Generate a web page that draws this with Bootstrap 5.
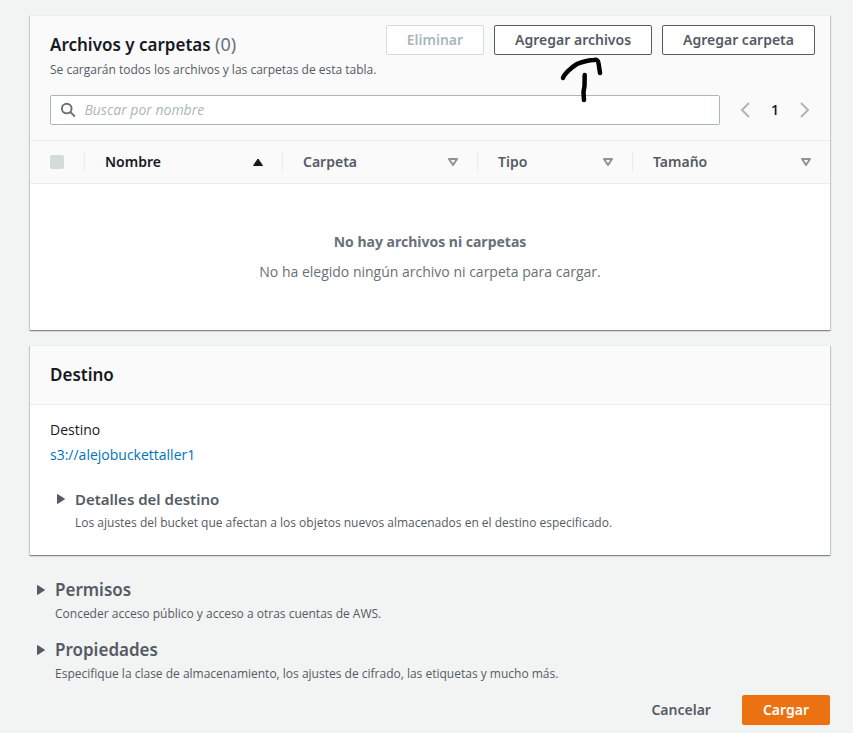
<!DOCTYPE html>
<html lang="es">
<head>
<meta charset="utf-8">
<meta name="viewport" content="width=device-width, initial-scale=1">
<title>Cargar</title>
<link href="https://cdn.jsdelivr.net/npm/bootstrap@5.3.0/dist/css/bootstrap.min.css" rel="stylesheet">
<style>
  body { background: #f2f3f3; color: #16191f; font-family: "Open Sans", "Noto Sans", sans-serif; font-size: 14px; line-height: 20px; }
  h2, h3, th, .act, .empty-title { font-family: "Noto Sans", "Open Sans", sans-serif; }
  .page { padding: 15px 23px 8px 30px; }
  .panel { background: #fff; box-shadow: 0 1px 1px 0 rgba(0,28,36,.3), 1px 1px 1px 0 rgba(0,28,36,.15), -1px 1px 1px 0 rgba(0,28,36,.15); border-top: 1px solid #eaeded; }
  .panel + .panel { margin-top: 15px; }
  .panel-top { background: #fafafa; border-bottom: 1px solid #eaeded; }
  .files-top { padding: 9px 15px 15px 20px; }
  .dest-top { padding: 18px 20px; }
  h2, h3 { font-size: 17px; line-height: 22px; font-weight: 600; margin: 0; }
  h3.minor { font-size: 15px; }
  .counter { color: #687078; font-size: 18px; line-height: 18px; }
  .heading-box { padding-top: 9px; }
  .hint { font-size: 12px; line-height: 18px; color: #545b64; margin: 0; }
  .heading-box .hint { margin-top: 5px; }
  .act { --bs-btn-padding-x: 20px; --bs-btn-padding-y: 4px; --bs-btn-font-size: 14px; --bs-btn-line-height: 20px; --bs-btn-font-weight: 600; --bs-btn-border-radius: 2px;
    --bs-btn-color: #545b64; --bs-btn-bg: #fff; --bs-btn-border-color: #545b64; --bs-btn-hover-bg: #fafafa; --bs-btn-hover-color: #16191f;
    --bs-btn-disabled-color: #aab7b8; --bs-btn-disabled-bg: #fff; --bs-btn-disabled-border-color: #d5dbdb; --bs-btn-disabled-opacity: 1; white-space: nowrap; }
  .act-group { gap: 10px; }
  .act-plain { --bs-btn-bg: transparent; --bs-btn-border-color: transparent; }
  .act-main { --bs-btn-color: #fff; --bs-btn-bg: #ec7211; --bs-btn-border-color: #ec7211; --bs-btn-hover-color: #fff; --bs-btn-hover-bg: #eb5f07; }
  .pen-arrow { left: 66px; top: 30px; z-index: 2; pointer-events: none; }
  .search-row { margin-top: 16px; gap: 20px; }
  .search-box { background: #fff; border: 1px solid #aab7b8; border-radius: 2px; height: 30px; padding-left: 9px; gap: 8px; }
  .search-box input { font-size: 14px; line-height: 20px; padding: 0; }
  .search-box input::placeholder { color: #aab7b8; font-style: italic; opacity: 1; }
  .pager button { width: 10px; height: 30px; padding: 0; border: 0; background: none; color: #aab7b8; }
  .pager { width: 70px; margin-right: 5px; }
  .pager .current { color: #16191f; font-weight: 600; font-size: 14px; width: 20px; }
  .files { table-layout: fixed; }
  .files th { background: #fafafa; padding: 11px 0; color: #545b64; font-weight: 600; border-bottom: 1px solid #eaeded; }
  .files th:first-child { padding-left: 20px; }
  .files .cell { border-left: 1px solid #eaeded; padding: 0 18px 0 20px; }
  .files .cell button { font-weight: 600; padding: 0; border: 0; background: none; color: inherit; }
  .files .sorted { color: #16191f; }
  .files td { padding: 48px 20px; color: #687078; text-align: center; }
  .files td p { margin: 10px 0 0; }
  .files input { appearance: none; width: 14px; height: 14px; margin: 0; background: #d5dbdb; border-radius: 2px; display: block; }
  .c-check { width: 54px; } .c-name { width: 198px; } .c-folder { width: 195px; } .c-type { width: 155px; }
  .dest-body { padding: 15px 20px 23px; }
  .dest-body a { color: #0073bb; text-decoration: none; }
  .dest-uri { margin-top: 5px; }
  details { color: #545b64; }
  summary { display: grid; grid-template-columns: 20px 1fr; align-items: center; list-style: none; }
  summary::-webkit-details-marker { display: none; }
  summary .hint { grid-column: 2; margin-top: 4px; }
  .inner { margin: 23px 0 0 5px; }
  .outer { margin: 24px 0 0 5px; }
  .outer + .outer { margin-top: 16px; }
  .actions { margin-top: 12px; gap: 10px; }
</style>
</head>
<body>
<main class="page">
  <section class="panel">
    <div class="panel-top files-top">
      <div class="d-flex justify-content-between align-items-start">
        <div class="heading-box">
          <h2>Archivos y carpetas <span class="counter fw-normal">(0)</span></h2>
          <p class="hint">Se cargarán todos los archivos y las carpetas de esta tabla.</p>
        </div>
        <div class="act-group d-flex">
          <button type="button" class="btn act" disabled>Eliminar</button>
          <div class="position-relative">
            <button type="button" class="btn act">Agregar archivos</button>
            <svg class="pen-arrow position-absolute" width="44" height="50" viewBox="0 0 44 50" fill="none" stroke="#000" stroke-width="4.500" stroke-linecap="round" stroke-linejoin="round" aria-hidden="true"><path d="M3 23C4 19 12 12 17 9C21 7 30 5 34 5Q38 4 38.500 8L40 18"/><path d="M24.700 20L24.500 31L23.500 37L24 45"/></svg>
          </div>
          <button type="button" class="btn act">Agregar carpeta</button>
        </div>
      </div>
      <div class="search-row d-flex align-items-center">
        <label class="search-box d-flex align-items-center flex-grow-1">
          <svg width="17" height="16" viewBox="0 0 17 16" fill="none" stroke="#687078" stroke-width="2" aria-hidden="true"><circle cx="7" cy="6.500" r="5"/><path d="M10.500 10L15.500 14.800"/></svg>
          <input type="search" class="form-control border-0 shadow-none bg-transparent" placeholder="Buscar por nombre" aria-label="Buscar por nombre">
        </label>
        <nav class="pager d-flex align-items-center justify-content-between" aria-label="Paginación">
          <button type="button" class="d-flex align-items-center" aria-label="Página anterior"><svg width="10" height="16" viewBox="0 0 10 16" fill="none" stroke="currentColor" stroke-width="2"><path d="M9 1L2 8L9 15"/></svg></button>
          <button type="button" class="current" aria-current="page">1</button>
          <button type="button" class="d-flex align-items-center" aria-label="Página siguiente"><svg width="10" height="16" viewBox="0 0 10 16" fill="none" stroke="currentColor" stroke-width="2"><path d="M1 1L8 8L1 15"/></svg></button>
        </nav>
      </div>
    </div>
    <table class="files w-100">
      <colgroup><col class="c-check"><col class="c-name"><col class="c-folder"><col class="c-type"><col></colgroup>
      <thead>
        <tr>
          <th scope="col"><input type="checkbox" disabled aria-label="Seleccionar todo"></th>
          <th scope="col" aria-sort="ascending"><div class="cell sorted d-flex justify-content-between align-items-center"><button type="button">Nombre</button><svg width="12" height="8" viewBox="0 0 12 8" aria-hidden="true"><path d="M6 1L10.500 7.500H1.500Z" fill="#16191f" stroke="#16191f" stroke-linejoin="round"/></svg></div></th>
          <th scope="col"><div class="cell d-flex justify-content-between align-items-center"><button type="button">Carpeta</button><svg width="12" height="8" viewBox="0 0 12 8" aria-hidden="true"><path d="M2 1H10L6 7Z" fill="none" stroke="#879596" stroke-width="2" stroke-linejoin="round"/></svg></div></th>
          <th scope="col"><div class="cell d-flex justify-content-between align-items-center"><button type="button">Tipo</button><svg width="12" height="8" viewBox="0 0 12 8" aria-hidden="true"><path d="M2 1H10L6 7Z" fill="none" stroke="#879596" stroke-width="2" stroke-linejoin="round"/></svg></div></th>
          <th scope="col"><div class="cell d-flex justify-content-between align-items-center"><button type="button">Tamaño</button><svg width="12" height="8" viewBox="0 0 12 8" aria-hidden="true"><path d="M2 1H10L6 7Z" fill="none" stroke="#879596" stroke-width="2" stroke-linejoin="round"/></svg></div></th>
        </tr>
      </thead>
      <tbody><tr><td colspan="5"><strong class="empty-title">No hay archivos ni carpetas</strong><p>No ha elegido ningún archivo ni carpeta para cargar.</p></td></tr></tbody>
    </table>
  </section>

  <section class="panel">
    <div class="panel-top dest-top"><h2>Destino</h2></div>
    <div class="dest-body">
      <div>Destino</div>
      <div class="dest-uri"><a href="#">s3://alejobuckettaller1</a></div>
      <details class="inner">
        <summary><svg width="12" height="12" viewBox="0 0 12 12" aria-hidden="true"><path d="M2.500 1.500L9.500 6L2.500 10.500Z" fill="#545b64" stroke="#545b64" stroke-linejoin="round"/></svg><h3 class="minor">Detalles del destino</h3><p class="hint">Los ajustes del bucket que afectan a los objetos nuevos almacenados en el destino especificado.</p></summary>
      </details>
    </div>
  </section>

  <details class="outer">
    <summary><svg width="12" height="12" viewBox="0 0 12 12" aria-hidden="true"><path d="M2.500 1.500L9.500 6L2.500 10.500Z" fill="#545b64" stroke="#545b64" stroke-linejoin="round"/></svg><h3>Permisos</h3><p class="hint">Conceder acceso público y acceso a otras cuentas de AWS.</p></summary>
  </details>
  <details class="outer">
    <summary><svg width="12" height="12" viewBox="0 0 12 12" aria-hidden="true"><path d="M2.500 1.500L9.500 6L2.500 10.500Z" fill="#545b64" stroke="#545b64" stroke-linejoin="round"/></svg><h3>Propiedades</h3><p class="hint">Especifique la clase de almacenamiento, los ajustes de cifrado, las etiquetas y mucho más.</p></summary>
  </details>

  <div class="actions d-flex justify-content-end">
    <button type="button" class="btn act act-plain">Cancelar</button>
    <button type="button" class="btn act act-main">Cargar</button>
  </div>
</main>
<script src="https://cdn.jsdelivr.net/npm/bootstrap@5.3.0/dist/js/bootstrap.bundle.min.js"></script>
</body>
</html>
